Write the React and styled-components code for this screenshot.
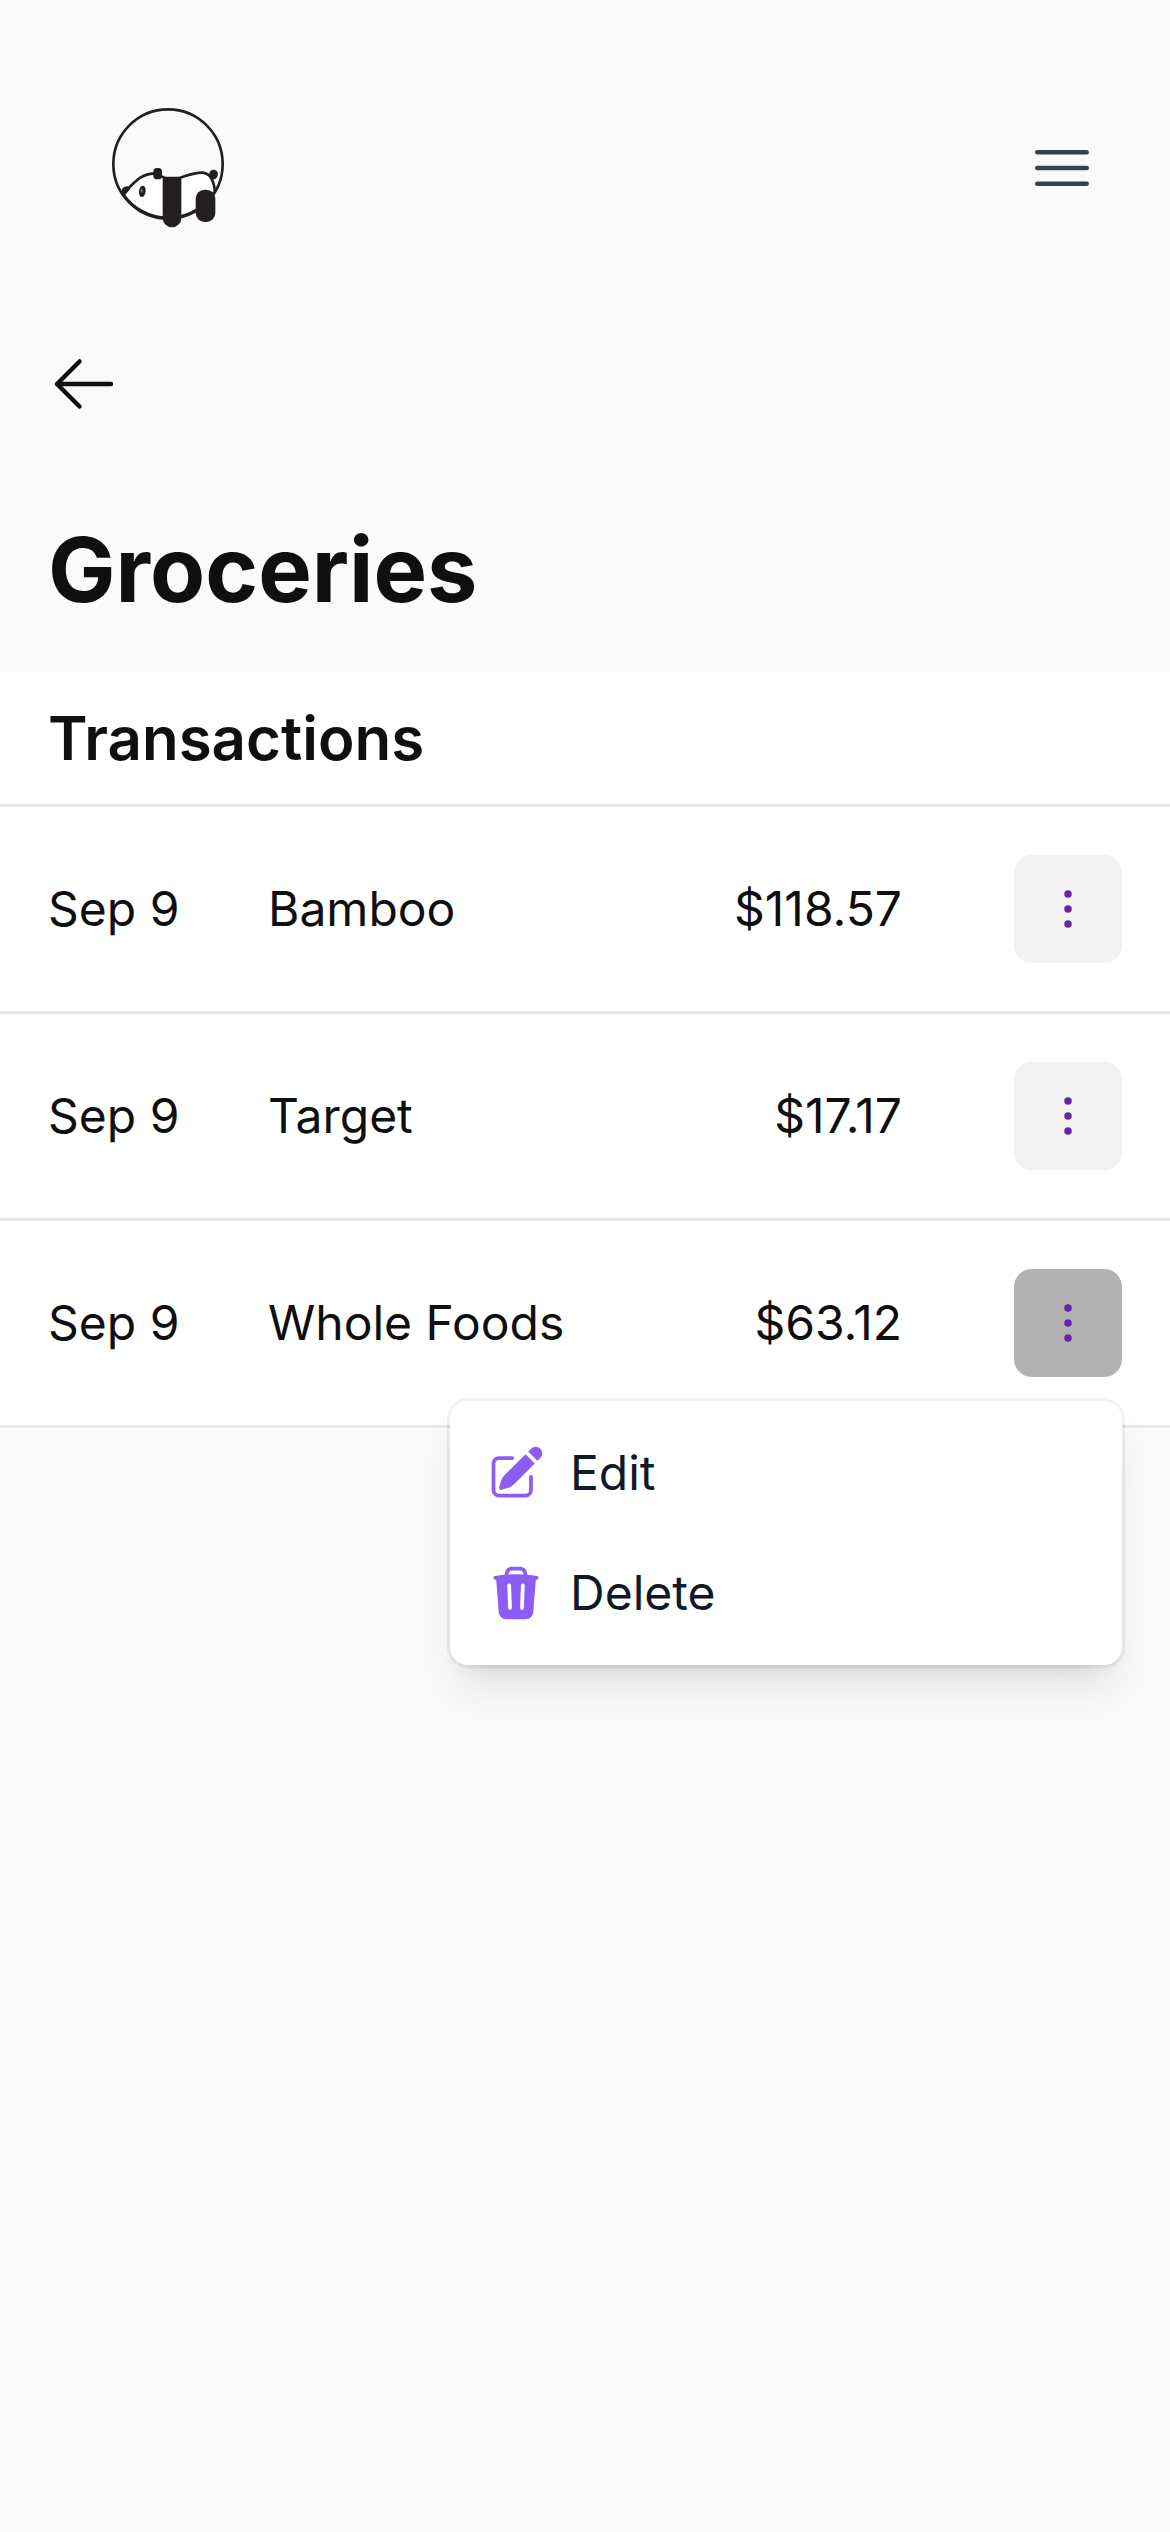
import React, { useState } from 'react'
import styled, { createGlobalStyle } from 'styled-components'
import {
  HiOutlineBars3,
  HiOutlineArrowLeft,
  HiEllipsisVertical,
  HiPencilSquare,
  HiTrash,
} from 'react-icons/hi2'

const transactions = [
  { id: 1, date: 'Sep 9', name: 'Bamboo', amount: '$118.57' },
  { id: 2, date: 'Sep 9', name: 'Target', amount: '$17.17' },
  { id: 3, date: 'Sep 9', name: 'Whole Foods', amount: '$63.12' },
]

function PandaLogo() {
  return (
    <Logo viewBox="18 18 432 432" fill="none" stroke="#231f20" aria-hidden="true">
      {/* body */}
      <path
        d="M99 312C118 292 134 274 152 262C166 254 182 250 198 250C208 251 214 262 226 264H268C294 256 314 247 338 248C358 251 370 264 375 304A164 164 0 0 1 99 312Z"
        fill="#fff"
        strokeWidth="8"
      />
      <circle cx="234" cy="222" r="164" strokeWidth="8" />
      <g fill="#231f20" stroke="none">
        {/* nose, ear, tail */}
        <path d="M93 307C95 294 103 288 112 289C120 291 124 296 118 300L105 316C100 317 94 312 93 307Z" />
        <rect x="190" y="234" width="26" height="34" rx="11" />
        <path d="M358 254C357 242 367 238 375 240C385 243 386 255 380 263C374 270 367 268 360 262Z" />
        {/* legs */}
        <path d="M218 260C235 263 255 263 274 260V384A28 28 0 0 1 218 384Z" />
        <rect x="317" y="299" width="59" height="97" rx="27" />
        <ellipse cx="157" cy="304" rx="10" ry="17" transform="rotate(8 157 304)" />
      </g>
      <ellipse cx="155" cy="302" rx="3" ry="6" fill="#777" stroke="none" />
    </Logo>
  )
}

export default function App() {
  const [openId, setOpenId] = useState(3)

  const toggle = (id) => setOpenId(openId === id ? null : id)

  return (
    <Page>
      <GlobalStyle />
      <Header>
        <LogoLink href="#" aria-label="Home">
          <PandaLogo />
        </LogoLink>
        <IconButton type="button" aria-label="Open menu">
          <HiOutlineBars3 />
        </IconButton>
      </Header>

      <main>
        <Intro>
          <BackLink href="#" aria-label="Back">
            <HiOutlineArrowLeft />
          </BackLink>
          <Title>Groceries</Title>
        </Intro>

        <Panel>
          <PanelTitle>Transactions</PanelTitle>
          <Table>
            <tbody>
              {transactions.map((item) => (
                <tr key={item.id}>
                  <DateCell>{item.date}</DateCell>
                  <Cell>{item.name}</Cell>
                  <AmountCell>{item.amount}</AmountCell>
                  <ActionCell>
                    <MenuAnchor>
                      <MoreButton
                        type="button"
                        aria-label="Options"
                        $open={openId === item.id}
                        onClick={() => toggle(item.id)}
                      >
                        <HiEllipsisVertical />
                      </MoreButton>
                      {openId === item.id &&
                        <Menu>
                          <MenuItem type="button">
                            <HiPencilSquare />
                            <span>Edit</span>
                          </MenuItem>
                          <MenuItem type="button">
                            <HiTrash />
                            <span>Delete</span>
                          </MenuItem>
                        </Menu>
                      }
                    </MenuAnchor>
                  </ActionCell>
                </tr>
              ))}
            </tbody>
          </Table>
        </Panel>
      </main>
    </Page>
  )
}

const GlobalStyle = createGlobalStyle`
  * {
    box-sizing: border-box;
  }

  body {
    margin: 0;
    background: #fafafa;
    color: #0f0f0f;
    font-family: Inter, sans-serif;
    font-optical-sizing: none;
    font-size: 48px;
    line-height: 72px;
  }

  button {
    font: inherit;
    color: inherit;
    border: none;
    cursor: pointer;
  }
`

const Page = styled.div`
  min-height: 100vh;
`

const Header = styled.header`
  display: flex;
  align-items: center;
  justify-content: space-between;
  padding: 96px 48px 96px 96px;
`

const LogoLink = styled.a`
  display: flex;
`

const Logo = styled.svg`
  width: 144px;
  height: 144px;
`

const IconButton = styled.button`
  display: flex;
  padding: 24px;
  background: none;
  color: #374151;

  svg {
    width: 72px;
    height: 72px;
  }
`

const Intro = styled.div`
  padding: 12px 48px 48px;
`

const BackLink = styled.a`
  display: inline-flex;
  vertical-align: top;
  color: inherit;

  svg {
    width: 72px;
    height: 72px;
  }
`

const Title = styled.h1`
  margin: 96px 0 0;
  font-size: 90px;
  line-height: 108px;
  font-weight: 700;
`

const Panel = styled.section`
  background: #fff;
`

const PanelTitle = styled.h2`
  margin: 0;
  padding: 24px 48px;
  font-size: 60px;
  line-height: 84px;
  font-weight: 600;
  border-bottom: 3px solid #e5e7eb;
`

const Table = styled.table`
  width: 100%;
  border-collapse: separate;
  border-spacing: 0;
`

const Cell = styled.td`
  padding: 48px 0;
  border-bottom: 3px solid #e5e7eb;
`

const DateCell = styled(Cell)`
  width: 268px;
  padding-left: 48px;
`

const AmountCell = styled(Cell)`
  text-align: right;
`

const ActionCell = styled(Cell)`
  width: 268px;
  padding-right: 48px;
`

const MenuAnchor = styled.div`
  position: relative;
  display: flex;
  justify-content: flex-end;
`

const MoreButton = styled.button`
  display: flex;
  padding: 24px;
  border-radius: 18px;
  background: ${(props) => (props.$open ? '#b2b2b2' : '#f2f2f2')};
  color: #6b21a8;

  svg {
    width: 60px;
    height: 60px;
  }
`

const Menu = styled.div`
  position: absolute;
  top: 100%;
  right: 0;
  z-index: 1;
  width: 672px;
  margin-top: 24px;
  padding: 12px 0;
  border-radius: 18px;
  background: #fff;
  box-shadow: 0 0 0 3px rgba(0, 0, 0, 0.05),
    0 30px 45px -9px rgba(0, 0, 0, 0.1),
    0 12px 18px -12px rgba(0, 0, 0, 0.1);
`

const MenuItem = styled.button`
  display: flex;
  align-items: center;
  gap: 24px;
  width: 100%;
  padding: 24px 36px;
  background: none;
  text-align: left;

  svg {
    width: 60px;
    height: 60px;
    color: #8b5cf6;
  }

  span {
    color: #111827;
  }
`
